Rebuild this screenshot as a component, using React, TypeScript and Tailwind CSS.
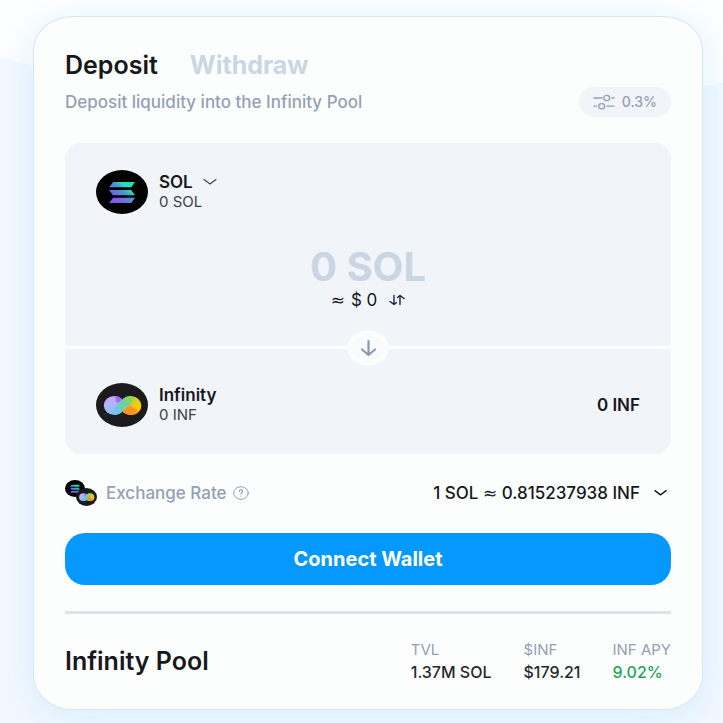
import { useId, useState } from 'react'

type IconProps = { className?: string }

function SolIcon({ className }: IconProps) {
  const id = useId()

  return (
    <svg viewBox="0 0 52 44" className={className} aria-hidden="true">
      <defs>
        <linearGradient id={id} gradientUnits="userSpaceOnUse" x1="15" y1="34" x2="36" y2="11">
          <stop offset="0.1" stopColor="#8752f3" />
          <stop offset="0.3" stopColor="#7a62ea" />
          <stop offset="0.55" stopColor="#4795c9" />
          <stop offset="0.75" stopColor="#28e0b9" />
          <stop offset="1" stopColor="#22dcb0" />
        </linearGradient>
      </defs>
      <ellipse cx="26" cy="22" rx="26" ry="22" fill="#000" />
      <g fill={`url(#${id})`}>
        <path d="M17.2 12H39l-3.6 5.3H13z" />
        <path d="M13 20h22.2l3.8 5.2H17z" />
        <path d="M17.2 27.8H39l-3.6 5.2H13z" />
      </g>
    </svg>
  )
}

function InfIcon({ className }: IconProps) {
  const id = useId()

  return (
    <svg viewBox="0 0 52 44" className={className} aria-hidden="true">
      <defs>
        <linearGradient id={`${id}-l`} x1="0.3" y1="0" x2="0.6" y2="1">
          <stop offset="0" stopColor="#c4a8ff" />
          <stop offset="0.45" stopColor="#b3b4fb" />
          <stop offset="1" stopColor="#6cc5f8" />
        </linearGradient>
        <linearGradient id={`${id}-r`} x1="0.2" y1="0" x2="0.9" y2="0.6">
          <stop offset="0" stopColor="#86d34a" />
          <stop offset="0.5" stopColor="#c3d62a" />
          <stop offset="1" stopColor="#fcc90b" />
        </linearGradient>
        <linearGradient id={`${id}-b`} x1="0" y1="1" x2="1" y2="0">
          <stop offset="0" stopColor="#6cc5f8" />
          <stop offset="0.5" stopColor="#68cfb0" />
          <stop offset="1" stopColor="#94d644" />
        </linearGradient>
      </defs>
      <ellipse cx="26" cy="22" rx="26" ry="22" fill="#1b1b1d" />
      <ellipse cx="18.3" cy="22.5" rx="10.5" ry="9.5" fill={`url(#${id}-l)`} />
      <path d="M19 13.1c3.2.1 5.6 1.4 7.3 3.6L21 20.5z" fill="#9d6af7" />
      <ellipse cx="34.7" cy="22.5" rx="10.5" ry="9.5" fill={`url(#${id}-r)`} />
      <path d="M26 28l8-6 9 6.400c-2 2.300-4.800 3.600-7.800 3.600-3.500 0-7-1.500-9.200-4z" fill="#ff9322" />
      <path d="M34 22l11.200 0c.2 2.500-.6 4.800-2.300 6.500z" fill="#fdc60a" />
      <path d="M19 32c3.500-.2 5.700-1.800 7.500-4l9-7.500c1-2 .8-5-.5-7.500-4 0-6.800 1.300-9 4l-7 7.500c-1.500 1.800-1.500 4.500 0 7.500z" fill={`url(#${id}-b)`} />
    </svg>
  )
}

function Chevron({ className }: IconProps) {
  return (
    <svg viewBox="0 0 14 8" fill="none" stroke="currentColor" className={className} aria-hidden="true">
      <path d="M1 1.500l6 4.500 6-4.500" strokeLinecap="round" strokeLinejoin="round" />
    </svg>
  )
}

const stats = [
  { label: 'TVL', value: '1.37M SOL', color: 'text-[#25272b]' },
  { label: '$INF', value: '$179.21', color: 'text-[#25272b]' },
  { label: 'INF APY', value: '9.02%', color: 'text-[#22a45a]' },
]

export default function App() {
  const [tab, setTab] = useState('Deposit')
  const [amount, setAmount] = useState('')

  return (
    <main className="min-h-screen bg-[#f3f8ff] bg-[radial-gradient(1000px_516px_at_423px_-409px,#fdfeff_99.8%,transparent_100%)] pt-4 pr-5 pb-3 pl-[33px] font-['Inter',sans-serif] text-[#17181c]">
      <section className="rounded-[40px/34px] border border-[#dbe4ee] bg-[#fcfefd] px-[31px] pt-8 pb-[26px] shadow-[0_8px_32px_6px_rgba(180,225,255,0.35)]">
        {/* Tabs */}
        <div className="flex gap-8 text-[25px] leading-8">
          {['Deposit', 'Withdraw'].map((name) => (
            <button
              key={name}
              onClick={() => setTab(name)}
              className={tab === name ? 'font-semibold' : 'font-bold text-[#cad6e3]'}
            >
              {name}
            </button>
          ))}
        </div>

        <div className="mt-[6px] flex items-center justify-between">
          <p className="text-[17px] leading-6 font-medium text-[#94a0b4]">Deposit liquidity into the Infinity Pool</p>
          <button className="flex h-[30px] items-center gap-[7px] rounded-full bg-[#f1f4f9] px-[14px] text-sm font-medium text-[#94a0b4]">
            <svg viewBox="0 0 22 16" className="h-4 w-[22px]" fill="none" stroke="currentColor" strokeWidth="1.300" strokeLinecap="round" aria-hidden="true">
              <path d="M1 4h8M19 4h2M1 12.200h2.500M14 12.200h7" />
              <ellipse cx="13.700" cy="4" rx="3" ry="2.600" />
              <ellipse cx="8.700" cy="12.200" rx="3" ry="2.600" />
            </svg>
            0.3%
          </button>
        </div>

        {/* Swap panel */}
        <div className="mt-[26px] rounded-2xl bg-[#f1f4f9]">
          <div className="px-[31px] pt-[27px] pb-[34px]">
            <div className="flex items-center gap-[11px]">
              <SolIcon className="h-11 w-[52px]" />
              <div>
                <button className="flex items-center gap-[10px] text-[17px] leading-5 font-semibold">
                  SOL
                  <Chevron className="h-2 w-[14px] stroke-[1.2] text-[#3b4468]" />
                </button>
                <p className="text-[15px] leading-5 text-[#3c3f46]">0 SOL</p>
              </div>
            </div>
            <div className="mt-8 flex flex-col items-center">
              <input
                aria-label="Amount to deposit"
                placeholder="0 SOL"
                value={amount}
                onChange={(e) => setAmount(e.target.value)}
                className="h-[42px] w-full bg-transparent text-center text-[40px] font-bold outline-none placeholder:text-[#cad6e3]"
              />
              <button className="flex items-center gap-3 text-[17px] leading-6">
                <span className="flex items-center gap-[6px]">
                  <span className="font-['DejaVu_Sans',sans-serif]">≈</span>
                  <span>$ 0</span>
                </span>
                <svg viewBox="0 0 16 12" className="h-3 w-4" fill="none" stroke="#1c1f4a" strokeWidth="1.400" strokeLinecap="round" strokeLinejoin="round" aria-hidden="true">
                  <path d="M5 1.500v9M1 7.500l4 3 2.500-2M11 10.500v-9M15 4.500l-4-3-2.500 2" />
                </svg>
              </button>
            </div>
          </div>

          <div className="relative h-[3px] bg-[#fcfefd]">
            <button aria-label="Swap direction" className="absolute top-1/2 left-1/2 flex h-[35px] w-[41px] -translate-x-1/2 -translate-y-1/2 items-center justify-center rounded-[50%] border-4 border-[#fcfefd] bg-[#f9fbfd] text-[#8c98ad]">
              <svg viewBox="0 0 16 17" className="h-[17px] w-4 shrink-0" fill="none" stroke="currentColor" strokeWidth="2.200" strokeLinecap="round" strokeLinejoin="round" aria-hidden="true">
                <path d="M8 1.500v14M1.500 10L8 15.500l6.500-5.500" />
              </svg>
            </button>
          </div>

          <div className="flex items-center gap-[11px] px-[31px] pt-[34px] pb-[27px]">
            <InfIcon className="h-11 w-[52px]" />
            <div>
              <p className="text-[17px] leading-5 font-semibold">Infinity</p>
              <p className="text-[15px] leading-5 text-[#3c3f46]">0 INF</p>
            </div>
            <p className="ml-auto text-[17px] leading-6 font-semibold">0 INF</p>
          </div>
        </div>

        {/* Exchange rate */}
        <div className="mt-[26px] flex items-center justify-between">
          <div className="flex items-center text-[#94a0b4]">
            <div className="relative h-[26px] w-8">
              <SolIcon className="h-[17px] w-5" />
              <InfIcon className="absolute right-0 bottom-0 h-[18px] w-[21px]" />
            </div>
            <p className="ml-[9px] text-[17px] leading-6 font-medium">Exchange Rate</p>
            <button aria-label="About the exchange rate" className="ml-[6px]">
              <svg viewBox="0 0 16 14" className="h-[14px] w-4" fill="none" stroke="currentColor" strokeLinecap="round" aria-hidden="true">
                <ellipse cx="8" cy="7" rx="7.300" ry="6.300" />
                <path d="M6.300 5.500c0-2.200 3.400-2.200 3.400-.2 0 1.300-1.700 1.300-1.700 2.500M8 10v.1" strokeWidth="1.200" />
              </svg>
            </button>
          </div>
          <button className="flex items-center gap-[14px] pr-1 text-[17px] leading-6 font-medium">
            <span>
              1 SOL <span className="font-['DejaVu_Sans',sans-serif] font-normal">≈</span> 0.815237938 INF
            </span>
            <Chevron className="h-2 w-[13px] stroke-[1.5]" />
          </button>
        </div>

        <button className="mt-[27px] h-[52px] w-full rounded-[20px] bg-[#0598ff] text-xl font-bold text-white">
          Connect Wallet
        </button>

        <hr className="mt-[26px] border-t-[3px] border-[#dde2eb]" />

        {/* Pool stats */}
        <div className="mt-[25px] flex items-center justify-between">
          <h2 className="text-[25px] leading-8 font-semibold">Infinity Pool</h2>
          <dl className="flex gap-8">
            {stats.map((stat) => (
              <div key={stat.label}>
                <dt className="text-[15px] leading-[22px] text-[#94a0b4]">{stat.label}</dt>
                <dd className={`text-base leading-[22px] font-medium ${stat.color}`}>{stat.value}</dd>
              </div>
            ))}
          </dl>
        </div>
      </section>
    </main>
  )
}
